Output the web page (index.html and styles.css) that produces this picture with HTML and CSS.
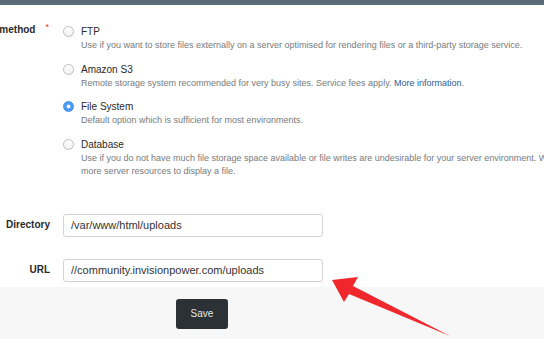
FILE: index.html
```html
<!DOCTYPE html>
<html lang="en">
<head>
    <meta charset="UTF-8">
    <meta name="viewport" content="width=device-width, initial-scale=1.0">
    <title>Storage Settings</title>
    <link rel="stylesheet" href="styles.css">
</head>
<body>
    <div class="topbar"></div>

    <form class="form">
        <!-- storage method -->
        <div class="row row-top">
            <div class="row-label">Storage method<span class="required">*</span></div>
            <div class="options">
                <label class="option">
                    <input type="radio" name="method">
                    <div class="option-text">
                        <div class="option-title">FTP</div>
                        <div class="option-desc">Use if you want to store files externally on a server optimised for rendering files or a third-party storage service.</div>
                    </div>
                </label>
                <label class="option">
                    <input type="radio" name="method">
                    <div class="option-text">
                        <div class="option-title">Amazon S3</div>
                        <div class="option-desc">Remote storage system recommended for very busy sites. Service fees apply. <a href="#">More information</a>.</div>
                    </div>
                </label>
                <label class="option">
                    <input type="radio" name="method" checked>
                    <div class="option-text">
                        <div class="option-title">File System</div>
                        <div class="option-desc">Default option which is sufficient for most environments.</div>
                    </div>
                </label>
                <label class="option">
                    <input type="radio" name="method">
                    <div class="option-text">
                        <div class="option-title">Database</div>
                        <div class="option-desc">Use if you do not have much file storage space available or file writes are undesirable for your server environment. Will use more server resources to display a file.</div>
                    </div>
                </label>
            </div>
        </div>

        <!-- paths -->
        <div class="row row-dir">
            <div class="row-label">Directory</div>
            <input class="text-input" type="text" value="/var/www/html/uploads">
        </div>
        <div class="row row-url">
            <div class="row-label">URL</div>
            <input class="text-input" type="text" value="//community.invisionpower.com/uploads">
        </div>

        <div class="form-footer">
            <button type="button" class="save-btn">Save</button>
        </div>
    </form>

    <!-- annotation arrow -->
    <svg class="arrow" width="544" height="350" viewBox="0 0 544 350">
        <polygon points="332,280 358,277 353,286 450,336 349,294 344,302" fill="#f0272d"/>
    </svg>
</body>
</html>
```

FILE: styles.css
```css
:root {
    --bar-color: #5b6b78;
    --text-main: #2a2a2a;
    --text-muted: #777a7d;
    --link-color: #2b5d98;
    --border-color: #d3d3d3;
    --band-bg: #f7f7f7;
    --btn-bg: #2b3134;
}

body {
    margin: 0;
    position: relative;
    overflow: hidden;
    background: #fff;
    font-family: 'Liberation Sans', Arial, sans-serif;
    color: var(--text-main);
}

.topbar {
    height: 5px;
    background: var(--bar-color);
}

.form {
    width: 580px;
    padding-top: 19px;
}

/* 表单行 */
.row {
    display: grid;
    grid-template-columns: 50px 1fr;
    column-gap: 13px;
}

.row-label {
    display: flex;
    justify-content: flex-end;
    white-space: nowrap;
    font-size: 10px;
    font-weight: bold;
    line-height: 14px;
}

.row-top .row-label {
    margin-top: -1px;
}

.required {
    color: #e0262b;
    font-size: 9px;
    line-height: 9px;
    margin-left: 10px;
    margin-right: 1px;
    font-weight: normal;
}

/* 单选项 */
.options {
    display: flex;
    flex-direction: column;
    gap: 9px;
}

.option {
    display: flex;
    align-items: flex-start;
    gap: 7px;
}

.option input {
    appearance: none;
    -webkit-appearance: none;
    margin: 2px 0 0;
    width: 11px;
    height: 11px;
    flex: none;
    border-radius: 50%;
    border: 1px solid #bdbdbd;
    background: linear-gradient(#fff, #f1f1f1);
}

.option input:checked {
    border-color: #3f8fee;
    background: radial-gradient(circle, #fff 0 1.5px, #4b9bf8 2.3px);
}

.option-title {
    font-size: 10px;
    line-height: 15px;
}

.option-desc {
    font-size: 9px;
    line-height: 13.5px;
    color: var(--text-muted);
}

.option-desc a {
    color: var(--link-color);
    text-decoration: none;
}

/* 输入框 */
.row-dir {
    margin-top: 35px;
    align-items: center;
}

.row-url {
    margin-top: 22px;
    align-items: center;
}

.text-input {
    box-sizing: border-box;
    width: 260px;
    height: 23px;
    margin: 0;
    padding: 0 7px;
    border: 1px solid var(--border-color);
    border-radius: 3px;
    font-family: inherit;
    font-size: 11px;
    color: #333;
    outline: none;
}

.form-footer {
    margin-top: 5px;
    height: 52px;
    box-sizing: border-box;
    padding: 12px 0 0 176px;
    background: var(--band-bg);
}

.save-btn {
    width: 52px;
    height: 30px;
    border: none;
    border-radius: 3px;
    background: var(--btn-bg);
    color: #e6e6e6;
    font-family: inherit;
    font-size: 10px;
    cursor: pointer;
}

.arrow {
    position: absolute;
    top: 0;
    left: 0;
    pointer-events: none;
}
```
